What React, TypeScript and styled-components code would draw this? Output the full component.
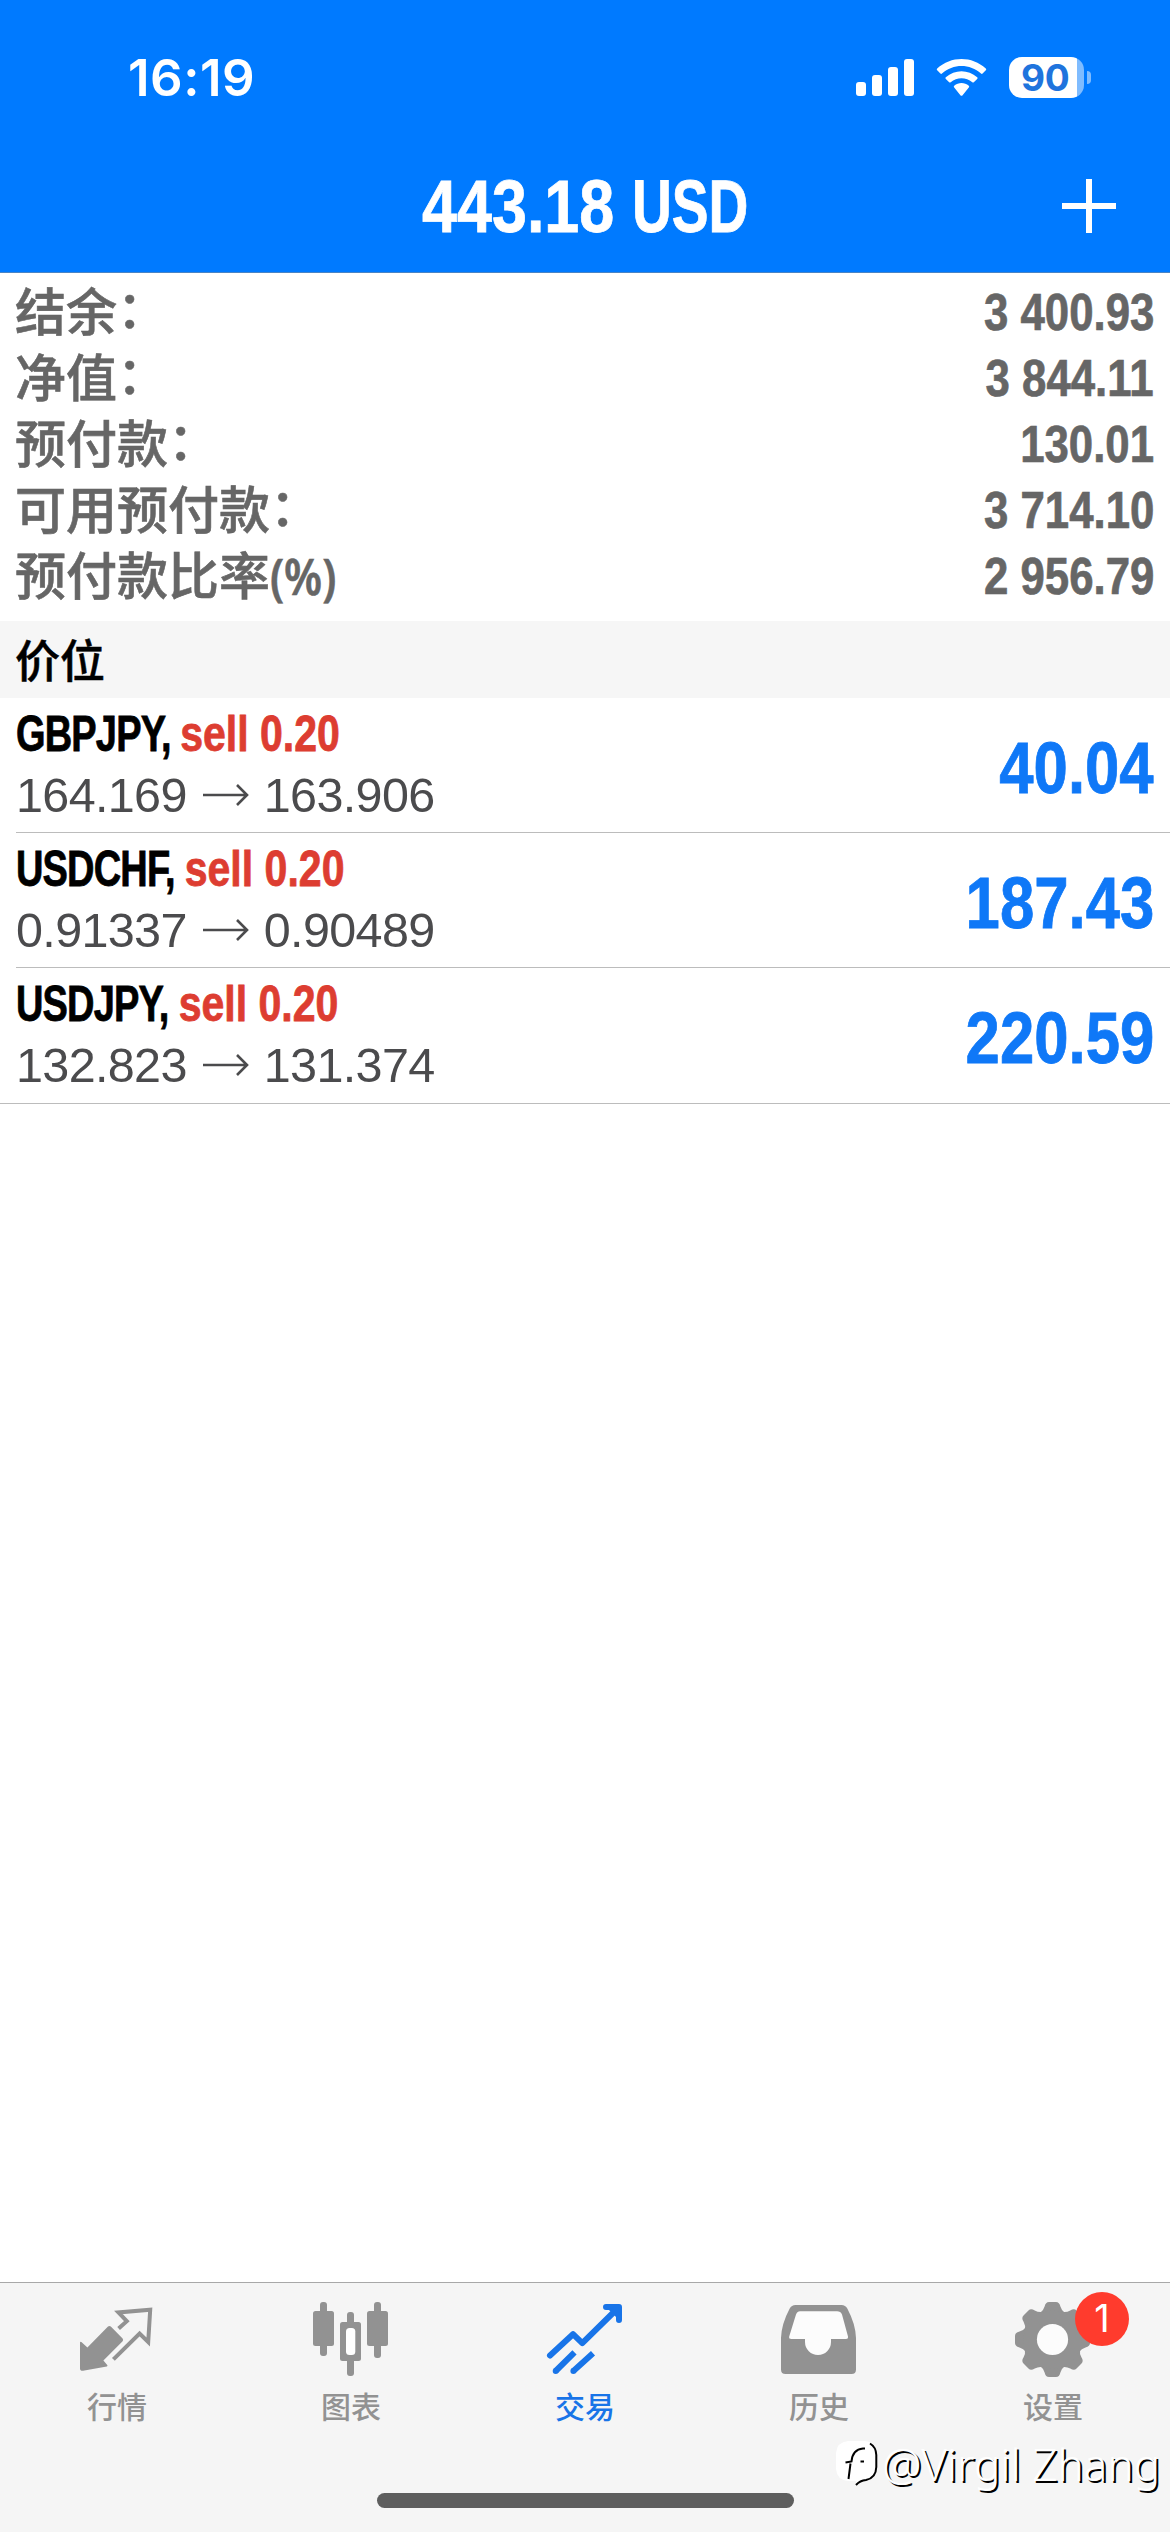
import React from "react";
import styled, { createGlobalStyle } from "styled-components";

const GlobalStyle = createGlobalStyle`
  * { box-sizing: border-box; }
  body { margin: 0; background: #fff; }
`;

const grotesque = `"Liberation Sans", sans-serif`;
const chinese = `"Noto Sans CJK SC", sans-serif`;

const Screen = styled.div`
  width: 1170px;
  height: 2532px;
  display: flex;
  flex-direction: column;
  background: #fff;
  overflow: hidden;
  font-family: "Liberation Sans", ${chinese};
`;

const Header = styled.header`
  height: 273px;
  background: #007aff;
  border-bottom: 1px solid #4a84c4;
  color: #fff;
  flex: none;
`;

const StatusBar = styled.div`
  height: 142px;
  display: flex;
  justify-content: space-between;
  align-items: flex-start;
  padding: 47px 79px 0 128px;
`;

const Clock = styled.span`
  font: 600 51px/62px Inter, sans-serif;
  letter-spacing: 0.5px;
`;

const StatusIcons = styled.div`
  display: flex;
  gap: 22px;
  padding-top: 10px;
`;

const BatteryBox = styled.div`
  display: flex;
  align-items: center;
  gap: 3px;
`;

const BatteryBody = styled.div`
  width: 75px;
  height: 41px;
  border-radius: 13px;
  background: linear-gradient(90deg, #fff 68px, #7fbcff 68px);
  color: #1f74dd;
  font: 700 37px/41px Inter, sans-serif;
  padding-left: 12px;
  letter-spacing: -0.4px;
`;

const BatteryNub = styled.div`
  width: 4px;
  height: 13px;
  border-radius: 0 5px 5px 0;
  background: #7fbcff;
`;

const TitleBar = styled.div`
  height: 130px;
  display: grid;
  grid-template-columns: 1fr auto 1fr;
  align-items: start;
  padding: 0 54px;
`;

const Title = styled.h1`
  grid-column: 2;
  margin: 25px 0 0;
  padding-left: 6px;
  display: flex;
  gap: 17px;
  font: 700 74px/80px ${grotesque};
  -webkit-text-stroke: 0.8px #fff;
`;

const TitleAmount = styled.span`
  transform: scaleX(0.85);
  transform-origin: right;
`;

const TitleCurrency = styled.span`
  transform: scaleX(0.745);
  transform-origin: left;
`;

const AddIcon = styled.svg`
  justify-self: end;
  margin-top: 37px;
`;

const Summary = styled.section`
  flex: none;
  height: 348px;
  padding: 6px 16px 0 15px;
  color: #666;
`;

const SummaryRow = styled.div`
  height: 66px;
  display: flex;
  justify-content: space-between;
`;

const SummaryLabel = styled.span`
  font: 500 51px/66px ${chinese};
  -webkit-text-stroke: 0.6px #666;
  height: 66px;
  margin-top: -3px;
`;

const Colon = styled.span`
  display: inline-block;
  transform: translate(0, -3px);
`;

const Unit = styled.span`
  display: inline-block;
  font-family: "Noto Sans", sans-serif;
  font-weight: 600;
  font-size: 50px;
  line-height: 60px;
  transform: scaleX(0.87);
  transform-origin: left;
`;

const SummaryValue = styled.span`
  font: 700 52px/66px ${grotesque};
  -webkit-text-stroke: 0.7px #666;
  transform: scaleX(0.842);
  transform-origin: right;
`;

const SectionTitle = styled.h2`
  flex: none;
  height: 77px;
  margin: 0;
  padding: 0 15px;
  background: #f6f6f6;
  color: #000;
  font: 500 45px/75px ${chinese};
  -webkit-text-stroke: 0.5px #000;
`;

const Positions = styled.section`
  flex: 1;
`;

const PositionRow = styled.article<{ $last: boolean }>`
  height: ${(p) => (p.$last ? 136 : 135)}px;
  margin-left: ${(p) => (p.$last ? 0 : 16)}px;
  padding: 0 16px 0 ${(p) => (p.$last ? 16 : 0)}px;
  border-bottom: 1px solid #bcbcbc;
  display: flex;
  justify-content: space-between;
`;

const PositionInfo = styled.div`
  display: flex;
  flex-direction: column;
  align-items: flex-start;
`;

const Instrument = styled.div`
  font: 700 50px/66px ${grotesque};
  -webkit-text-stroke: 0.8px currentColor;
  color: #000;
  transform: scaleX(0.76);
  transform-origin: left;
  padding-top: 3px;
  letter-spacing: -1.1px;
  height: 68px;
`;

const Side = styled.span`
  display: inline-block;
  color: #dd3d31;
  letter-spacing: 0;
  transform: scaleX(1.08);
  transform-origin: left;
`;

const Prices = styled.div`
  display: flex;
  align-items: center;
  font: 400 48.5px/58px ${grotesque};
  letter-spacing: -0.65px;
  color: #4b4b4d;
`;

const ArrowIcon = styled.svg`
  margin: 0 15px 0 16px;
`;

const Profit = styled.div`
  font: 700 73px/80px ${grotesque};
  -webkit-text-stroke: 0.8px #0f78f7;
  color: #0f78f7;
  padding-top: 30px;
  transform: scaleX(0.845);
  transform-origin: right;
`;

const TabBar = styled.nav`
  position: relative;
  flex: none;
  height: 250px;
  border-top: 1px solid #a8a8a8;
  background: #f5f5f5;
  display: flex;
  flex-direction: column;
  align-items: center;
  justify-content: space-between;
  padding-bottom: 24px;
`;

const Tabs = styled.div`
  width: 100%;
  display: grid;
  grid-template-columns: repeat(5, 1fr);
`;

const Tab = styled.div<{ $active?: boolean }>`
  display: flex;
  flex-direction: column;
  align-items: center;
  padding-top: 17px;
  color: ${(p) => (p.$active ? "#1874e8" : "#929292")};
`;

const TabIconBox = styled.div`
  position: relative;
  width: 80px;
  height: 80px;
`;

const TabLabel = styled.span`
  font: 500 30px/44px ${chinese};
  margin-top: 3px;
`;

const Badge = styled.span`
  position: absolute;
  left: 62px;
  top: -8px;
  width: 54px;
  height: 54px;
  border-radius: 50%;
  background: #ff3b2d;
  color: #fff;
  text-align: center;
  font: 400 38px/53px Inter, sans-serif;
`;

const HomeIndicator = styled.div`
  width: 417px;
  height: 15px;
  border-radius: 8px;
  background: #5e5e5e;
`;

const Watermark = styled.div`
  position: absolute;
  right: 10px;
  bottom: 38px;
  display: flex;
  align-items: center;
  gap: 4px;
  color: #fff;
  font: 300 44px/60px "Noto Sans", sans-serif;
  text-shadow: 2px 2px 0 #000;
  white-space: nowrap;
`;

const account = [
  { label: "结余", colon: true, value: "3 400.93" },
  { label: "净值", colon: true, value: "3 844.11" },
  { label: "预付款", colon: true, value: "130.01" },
  { label: "可用预付款", colon: true, value: "3 714.10" },
  { label: "预付款比率", unit: "(%)", value: "2 956.79" },
];

const positions = [
  { symbol: "GBPJPY", open: "164.169", now: "163.906", profit: "40.04" },
  { symbol: "USDCHF", open: "0.91337", now: "0.90489", profit: "187.43" },
  { symbol: "USDJPY", open: "132.823", now: "131.374", profit: "220.59" },
];

const SignalIcon = () => (
  <svg width="58" height="40" viewBox="0 0 58 40" fill="#fff">
    <rect x="0" y="25" width="10" height="14" rx="3" />
    <rect x="16" y="18" width="10" height="21" rx="3" />
    <rect x="32" y="10" width="10" height="29" rx="3" />
    <rect x="48" y="2" width="10" height="37" rx="3" />
  </svg>
);

const WifiIcon = () => (
  <svg width="51" height="40" viewBox="0 0 51 40" fill="#fff">
    <path d="M1.2 11.6C14.8-1.2 36.2-1.2 49.8 11.6q.8.8 0 1.6L46.6 16.6q-.8.8-1.6 0C34 6.4 17 6.4 6 16.6q-.8.8-1.6 0L1.2 13.2q-.8-.8 0-1.6Z" />
    <path d="M9.8 20.2c8.9-8 22.5-8 31.4 0q.9.8 0 1.7L37.8 25.2q-.7.7-1.5 0c-6.2-5.3-15.4-5.3-21.6 0q-.8.7-1.5 0L9.8 21.9q-.9-.9 0-1.7Z" />
    <path d="M18.2 28.8c4.2-3.6 10.4-3.6 14.6 0q.9.8 0 1.7L26.4 38.4q-.9.9-1.8 0L18.2 30.5q-.9-.9 0-1.7Z" />
  </svg>
);

const QuotesIcon = () => (
  <svg width="80" height="80" viewBox="0 0 80 80">
    <path d="M3 42.4Q3.2 41.4 4.4 42L10.4 47.4 31 26.4q1.4-1 2.8 0L45.6 38.4q1 1.4 0 2.8L26.4 60.6l4 4.6q.3 1-.6 1.2L6 70.8q-3 .2-3-2.4Z" fill="currentColor" />
    <path d="M41.6 28.6 49.8 21.2 41.4 12.4 73.2 9.8 71.2 42 62.6 33.6 36.4 59.4" fill="none" stroke="currentColor" strokeWidth="4" />
  </svg>
);

const ChartsIcon = () => (
  <svg width="80" height="80" viewBox="0 0 80 80" fill="currentColor">
    <rect x="9" y="2" width="7" height="54" rx="3" />
    <rect x="2" y="11" width="21" height="35" rx="2.5" />
    <rect x="36" y="12" width="7" height="64" rx="3" />
    <rect x="29" y="22" width="21" height="39" rx="2.5" />
    <rect x="35" y="28" width="9.3" height="27" rx="3.5" fill="#fff" />
    <rect x="63" y="2" width="7" height="56" rx="3" />
    <rect x="56" y="11" width="21" height="35" rx="2.5" />
  </svg>
);

const TradeIcon = () => (
  <svg width="80" height="80" viewBox="0 0 80 80" fill="none" stroke="currentColor" strokeWidth="6">
    <path d="M5 55.5 28 34.2 37.3 43.2 72 9" strokeLinecap="round" strokeLinejoin="round" />
    <path d="M61 7H74V20Z" fill="currentColor" stroke="none" />
    <path d="M61 7H74V20" strokeLinecap="round" strokeLinejoin="round" />
    <path d="M29.5 52.3 10.7 71M48 53.2 28.4 71" />
    <circle cx="10.7" cy="71" r="3" fill="currentColor" stroke="none" />
    <circle cx="28.4" cy="71" r="3" fill="currentColor" stroke="none" />
  </svg>
);

const HistoryIcon = () => (
  <svg width="80" height="80" viewBox="0 0 80 80" fill="currentColor">
    <path d="M16.5 5H62.5Q66.5 5 68.3 8.6 76.5 24 77 38V69.5Q77 74 72.5 74H6.5Q2 74 2 69.5V38Q2.5 24 10.7 8.6 12.5 5 16.5 5Z" />
    <path d="M21 11.3H58Q61.6 11.3 63 14.6L69 36.5Q69.3 39 67 39H52V42a13 13 0 0 1-26 0V39H12.5Q9.6 39 10.2 36.5L17 14.6Q18.4 11.3 21 11.3Z" fill="#fcfcfc" />
  </svg>
);

const GearIcon = () => (
  <svg width="80" height="80" viewBox="0 0 80 80" fill="currentColor">
    {[0, 45, 90, 135, 180, 225, 270, 315].map((angle) => (
      <path key={angle} transform={`rotate(${angle} 39.5 39.5)`} d="M27 13Q30.5 10.5 31.6 6.5 32.6 2 36 2H43Q46.4 2 47.4 6.5 48.5 10.5 52 13L45 20H34Z" />
    ))}
    <circle cx="39.5" cy="39.5" r="29" />
    <circle cx="39.5" cy="39.5" r="15.6" fill="#fcfcfc" />
  </svg>
);

const tabs = [
  { label: "行情", Icon: QuotesIcon },
  { label: "图表", Icon: ChartsIcon },
  { label: "交易", Icon: TradeIcon, active: true },
  { label: "历史", Icon: HistoryIcon },
  { label: "设置", Icon: GearIcon, badge: "1" },
];

const WatermarkLogo = () => (
  <svg width="44" height="50" viewBox="0 0 44 50">
    <path d="M14 2H31Q42 3 43 15V29Q42 40 31 41L23 47 22 42H14Q3 41 2 30V14Q3 3 14 2Z" fill="#fff" />
    <path d="M36 4.5Q42 8 42.3 16V28Q42 39 32 41 26 41.500 22 46" fill="none" stroke="#000" strokeWidth="2" />
    <path d="M31 9.5H29Q18.500 10.500 17.500 22.500L11.500 23.500M16.500 24.500 14.500 40M26.500 22.500H30" fill="none" stroke="#000" strokeWidth="2" />
  </svg>
);

export default function App() {
  return (
    <Screen>
      <GlobalStyle />
      <Header>
        <StatusBar>
          <Clock>16:19</Clock>
          <StatusIcons>
            <SignalIcon />
            <WifiIcon />
            <BatteryBox>
              <BatteryBody>90</BatteryBody>
              <BatteryNub />
            </BatteryBox>
          </StatusIcons>
        </StatusBar>
        <TitleBar>
          <Title>
            <TitleAmount>443.18</TitleAmount>
            <TitleCurrency>USD</TitleCurrency>
          </Title>
          <AddIcon width="54" height="54" viewBox="0 0 54 54">
            <path d="M27 0V54M0 27H54" stroke="#fff" strokeWidth="6" />
          </AddIcon>
        </TitleBar>
      </Header>
      <Summary>
        {account.map(({ label, colon, unit, value }) => (
          <SummaryRow key={label}>
            <SummaryLabel>
              {label}
              {colon && <Colon>：</Colon>}
              {unit && <Unit>{unit}</Unit>}
            </SummaryLabel>
            <SummaryValue>{value}</SummaryValue>
          </SummaryRow>
        ))}
      </Summary>
      <SectionTitle>价位</SectionTitle>
      <Positions>
        {positions.map((p, i) => (
          <PositionRow key={p.symbol} $last={i === positions.length - 1}>
            <PositionInfo>
              <Instrument>
                {p.symbol}, <Side>sell 0.20</Side>
              </Instrument>
              <Prices>
                {p.open}
                <ArrowIcon width="46" height="22" viewBox="0 0 46 22">
                  <path d="M0 11H44M34 1 44 11 34 21" fill="none" stroke="currentColor" strokeWidth="2.6" />
                </ArrowIcon>
                {p.now}
              </Prices>
            </PositionInfo>
            <Profit>{p.profit}</Profit>
          </PositionRow>
        ))}
      </Positions>
      <TabBar>
        <Tabs>
          {tabs.map(({ label, Icon, active, badge }) => (
            <Tab key={label} $active={active}>
              <TabIconBox>
                <Icon />
                {badge && <Badge>{badge}</Badge>}
              </TabIconBox>
              <TabLabel>{label}</TabLabel>
            </Tab>
          ))}
        </Tabs>
        <HomeIndicator />
        <Watermark>
          <WatermarkLogo />
          @Virgil Zhang
        </Watermark>
      </TabBar>
    </Screen>
  );
}
